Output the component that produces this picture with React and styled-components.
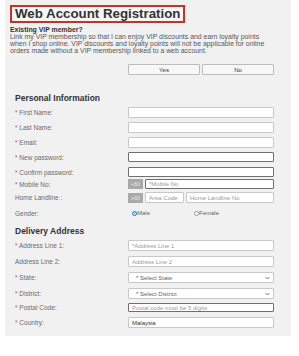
import React from 'react'
import styled, { createGlobalStyle } from 'styled-components'

const GlobalStyle = createGlobalStyle`
  body {
    margin: 0;
    background: #ffffff;
    font-family: "Liberation Sans", Arial, sans-serif;
  }
`

const Panel = styled.div`
  width: 286px;
  margin-left: 5px;
  box-sizing: border-box;
  padding: 4px 17px 8px 5px;
  background: #f1f1f1;
`

const TitleBox = styled.div`
  display: inline-block;
  box-sizing: border-box;
  height: 18px;
  padding: 0 3px;
  border: 2px solid #c9302c;
  background: #f6f6f6;
`

const Title = styled.h1`
  margin: 0;
  font-size: 13.3px;
  line-height: 14px;
  font-weight: bold;
  color: #333;
`

const Intro = styled.div`
  margin-top: 3px;
  font-size: 6.9px;
  line-height: 7px;
  white-space: nowrap;
  color: #555;
`

const IntroHead = styled.div`
  font-weight: bold;
  color: #333;
`

const ButtonRow = styled.div`
  display: flex;
  gap: 2px;
  margin: 10px 0 0 118px;
`

const ChoiceButton = styled.button`
  width: 72px;
  height: 11px;
  padding: 0;
  border: 1px solid #bdbdbd;
  border-radius: 1px;
  background: #f7f7f7;
  font-family: inherit;
  font-size: 6px;
  color: #333;
`

const Section = styled.div`
  padding-left: 5px;
`

const SectionTitle = styled.h2`
  margin: 0;
  height: 10px;
  font-size: 8.5px;
  line-height: 10px;
  font-weight: bold;
  color: #333;
  margin-top: ${(p) => p.$top}px;
  margin-bottom: ${(p) => p.$bottom}px;
`

const Row = styled.div`
  display: grid;
  grid-template-columns: 113px 146px;
  align-items: center;
  height: ${(p) => p.$h || 11}px;
  margin-bottom: ${(p) => p.$gap}px;
`

const Label = styled.span`
  font-size: 6.5px;
  color: #6a6a6a;
`

const Star = styled.span`
  color: #d9534f;
`

const Field = styled.input`
  box-sizing: border-box;
  width: ${(p) => p.$w || '100%'};
  height: ${(p) => p.$h || 11}px;
  margin: 0;
  padding: 0 3px;
  border: 1px solid ${(p) => (p.$dark ? '#6f6f6f' : '#c8c8c8')};
  border-radius: 1px;
  background: #fff;
  font-family: inherit;
  font-size: 6px;
  color: #333;
  outline: none;
  &::placeholder {
    color: #9a9a9a;
  }
`

const Group = styled.div`
  display: flex;
  align-items: center;
  gap: 2px;
`

const Prefix = styled.span`
  width: 15px;
  height: 10px;
  flex: none;
  background: #a9a9a9;
  color: #e8e8e8;
  font-size: 5.5px;
  line-height: 10px;
  text-align: center;
`

const Select = styled.div`
  box-sizing: border-box;
  display: flex;
  align-items: center;
  justify-content: space-between;
  height: 11px;
  padding: 0 3px 0 7px;
  border: 1px solid #c8c8c8;
  border-radius: 1px;
  background: #fff;
  font-size: 6px;
  color: #666;
`

const Radios = styled.div`
  display: flex;
  padding-left: 4px;
`

const RadioOption = styled.label`
  display: flex;
  align-items: center;
  width: 62px;
  font-size: 6px;
  color: #666;
`

const Dot = styled.span`
  box-sizing: border-box;
  width: 5px;
  height: 5px;
  border-radius: 50%;
  border: 1px solid ${(p) => (p.$on ? '#2d7be5' : '#999')};
  background: ${(p) => (p.$on ? '#3d8bf0' : '#fff')};
  box-shadow: ${(p) => (p.$on ? 'inset 0 0 0 1px #fff' : 'none')};
`

const Chevron = () => (
  <svg width="5" height="4" viewBox="0 0 10 6">
    <path d="M1 1l4 4 4-4" fill="none" stroke="#555" strokeWidth="1.6" />
  </svg>
)

const FormLabel = ({ req, children }) => (
  <Label>
    {req && <Star>* </Star>}
    {children}
  </Label>
)

export default function App() {
  return (
    <>
      <GlobalStyle />
      <Panel>
        <TitleBox>
          <Title>Web Account Registration</Title>
        </TitleBox>
        <Intro>
          <IntroHead>Existing VIP member?</IntroHead>
          Link my VIP membership so that I can enjoy VIP discounts and earn loyalty points<br />
          when I shop online. VIP discounts and loyalty points will not be applicable for online<br />
          orders made without a VIP membership linked to a web account.
        </Intro>
        <ButtonRow>
          <ChoiceButton>Yes</ChoiceButton>
          <ChoiceButton>No</ChoiceButton>
        </ButtonRow>

        <Section>
          <SectionTitle $top={18} $bottom={4}>Personal Information</SectionTitle>
          <Row $gap={4}>
            <FormLabel req>First Name:</FormLabel>
            <Field />
          </Row>
          <Row $gap={4}>
            <FormLabel req>Last Name:</FormLabel>
            <Field />
          </Row>
          <Row $gap={4}>
            <FormLabel req>Email:</FormLabel>
            <Field />
          </Row>
          <Row $gap={5} $h={10}>
            <FormLabel req>New password:</FormLabel>
            <Field type="password" $dark $h={10} />
          </Row>
          <Row $gap={2} $h={10}>
            <FormLabel req>Confirm password:</FormLabel>
            <Field type="password" $dark $h={10} />
          </Row>
          <Row $gap={3} $h={10}>
            <FormLabel req>Mobile No:</FormLabel>
            <Group>
              <Prefix>+60</Prefix>
              <Field $dark $h={10} placeholder="*Mobile No" />
            </Group>
          </Row>
          <Row $gap={5}>
            <FormLabel>Home Landline :</FormLabel>
            <Group>
              <Prefix>+60</Prefix>
              <Field $w="39px" placeholder="Area Code" />
              <Field placeholder="Home Landline No" />
            </Group>
          </Row>
          <Row $gap={0} $h={10}>
            <FormLabel>Gender:</FormLabel>
            <Radios>
              <RadioOption><Dot $on />Male</RadioOption>
              <RadioOption><Dot />Female</RadioOption>
            </Radios>
          </Row>

          <SectionTitle $top={8} $bottom={4}>Delivery Address</SectionTitle>
          <Row $gap={5}>
            <FormLabel req>Address Line 1:</FormLabel>
            <Field placeholder="*Address Line 1" />
          </Row>
          <Row $gap={5}>
            <FormLabel>Address Line 2:</FormLabel>
            <Field placeholder="Address Line 2" />
          </Row>
          <Row $gap={5}>
            <FormLabel req>State:</FormLabel>
            <Select>* Select State<Chevron /></Select>
          </Row>
          <Row $gap={4}>
            <FormLabel req>District:</FormLabel>
            <Select>* Select District<Chevron /></Select>
          </Row>
          <Row $gap={5} $h={9}>
            <FormLabel req>Postal Code:</FormLabel>
            <Field $dark $h={9} placeholder="Postal code must be 5 digits" />
          </Row>
          <Row $gap={0}>
            <FormLabel req>Country:</FormLabel>
            <Field defaultValue="Malaysia" />
          </Row>
        </Section>
      </Panel>
    </>
  )
}
